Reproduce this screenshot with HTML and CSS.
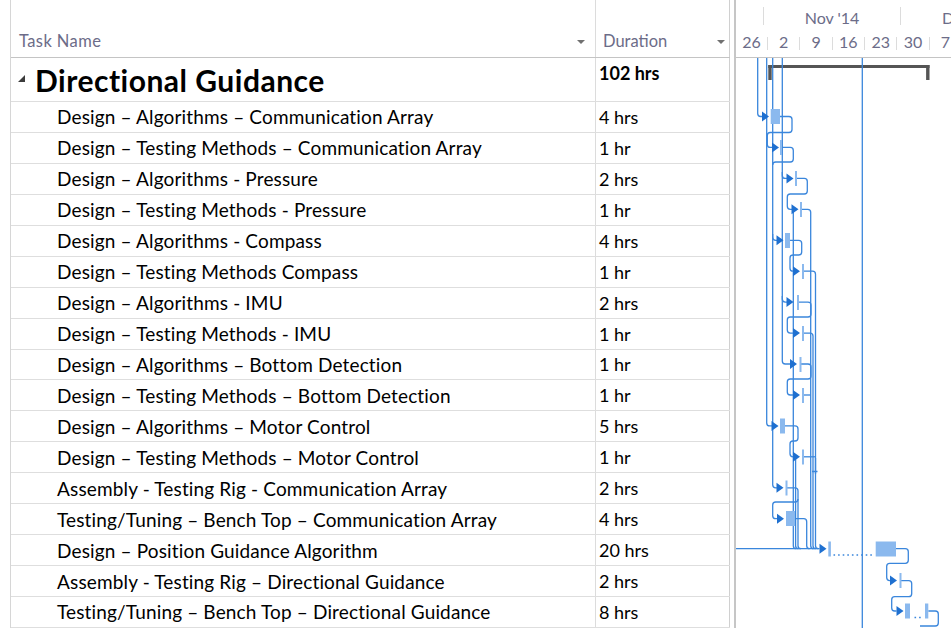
FILE: index.html
```html
<!DOCTYPE html>
<html lang="en">
<head>
<meta charset="utf-8">
<title>Directional Guidance – Gantt</title>
<link rel="stylesheet" href="styles.css">
</head>
<body>
<div class="app">
  <div class="sheet">
    <div class="sheet-head">
      <div class="col col-name"><span class="hlabel name-label">Task Name</span><span class="dd dd-name"></span></div>
      <div class="col col-dur"><span class="hlabel dur-label">Duration</span><span class="dd dd-dur"></span></div>
    </div>
    <div class="row summary">
      <div class="col col-name"><span class="twisty"></span><span class="sum-title">Directional Guidance</span></div>
      <div class="col col-dur"><span class="sum-dur">102 hrs</span></div>
    </div>
    <div class="row task"><div class="col col-name">Design – Algorithms – Communication Array</div><div class="col col-dur">4 hrs</div></div>
    <div class="row task"><div class="col col-name">Design – Testing Methods – Communication Array</div><div class="col col-dur">1 hr</div></div>
    <div class="row task"><div class="col col-name">Design – Algorithms - Pressure</div><div class="col col-dur">2 hrs</div></div>
    <div class="row task"><div class="col col-name">Design – Testing Methods - Pressure</div><div class="col col-dur">1 hr</div></div>
    <div class="row task"><div class="col col-name">Design – Algorithms - Compass</div><div class="col col-dur">4 hrs</div></div>
    <div class="row task"><div class="col col-name">Design – Testing Methods Compass</div><div class="col col-dur">1 hr</div></div>
    <div class="row task"><div class="col col-name">Design – Algorithms - IMU</div><div class="col col-dur">2 hrs</div></div>
    <div class="row task"><div class="col col-name">Design – Testing Methods - IMU</div><div class="col col-dur">1 hr</div></div>
    <div class="row task"><div class="col col-name">Design – Algorithms – Bottom Detection</div><div class="col col-dur">1 hr</div></div>
    <div class="row task"><div class="col col-name">Design – Testing Methods – Bottom Detection</div><div class="col col-dur">1 hr</div></div>
    <div class="row task"><div class="col col-name">Design – Algorithms – Motor Control</div><div class="col col-dur">5 hrs</div></div>
    <div class="row task"><div class="col col-name">Design – Testing Methods – Motor Control</div><div class="col col-dur">1 hr</div></div>
    <div class="row task"><div class="col col-name">Assembly - Testing Rig - Communication Array</div><div class="col col-dur">2 hrs</div></div>
    <div class="row task"><div class="col col-name">Testing/Tuning – Bench Top – Communication Array</div><div class="col col-dur">4 hrs</div></div>
    <div class="row task"><div class="col col-name">Design – Position Guidance Algorithm</div><div class="col col-dur">20 hrs</div></div>
    <div class="row task"><div class="col col-name">Assembly - Testing Rig – Directional Guidance</div><div class="col col-dur">2 hrs</div></div>
    <div class="row task"><div class="col col-name">Testing/Tuning – Bench Top – Directional Guidance</div><div class="col col-dur">8 hrs</div></div>
  </div>
  <div class="splitter"></div>
  <div class="chart">
    <div class="timescale">
      <div class="tier tier-top">
        <div class="tcell lead"></div>
        <div class="tcell month">Nov '14</div>
        <div class="tcell month">Dec '14</div>
      </div>
      <div class="tier tier-bottom">
        <div class="wcell lead">26</div>
        <div class="wcell">2</div>
        <div class="wcell">9</div>
        <div class="wcell">16</div>
        <div class="wcell">23</div>
        <div class="wcell">30</div>
        <div class="wcell">7</div>
      </div>
    </div>
    <svg class="gantt" width="215" height="570" viewBox="736 58 215 570">
      <!-- summary bar -->
      <g class="summary-bar">
        <rect x="768.3" y="65" width="161.2" height="3"/>
        <rect x="768.3" y="65" width="3.4" height="15"/>
        <rect x="926.1" y="65" width="3.4" height="15"/>
      </g>

      <!-- dependency links -->
      <g class="links">
        <path d="M757.7 58 V113.5 Q757.7 116.5 760.7 116.5 H762"/>
        <path d="M766.7 58 V422.9 Q766.7 425.9 769.7 425.9 H772"/>
        <path d="M772.7 58 V484.8 Q772.7 487.8 775.7 487.8 H777"/>
        <path d="M772.7 234 V237.3 Q772.7 240.3 775.7 240.3 H777"/>
        <path d="M782.3 58 V361 Q782.3 364 785.3 364 H790"/>
        <path d="M782.3 172 V175.4 Q782.3 178.4 785.3 178.4 H787"/>
        <path d="M782.3 296 V299.1 Q782.3 302.1 785.3 302.1 H787"/>

        <path d="M780 116.5 H789 Q792 116.5 792 119.5 V129.5 Q792 132.5 789 132.5 H770.3 Q767.3 132.5 767.3 135.5 V144.4 Q767.3 147.4 770.3 147.4 H772"/>
        <path d="M782 147.4 H790.3 Q793.3 147.4 793.3 150.4 V159 Q793.3 162 790.3 162 H775.7 Q772.7 162 772.7 165"/>
        <path d="M796.5 178.4 H804.3 Q807.3 178.4 807.3 181.4 V191 Q807.3 194 804.3 194 H790.3 Q787.3 194 787.3 197 V206.3 Q787.3 209.3 790.3 209.3 H792"/>
        <path d="M801.5 209.3 H807.7 Q810.7 209.3 810.7 212.3 V545.7 Q810.7 548.7 813.7 548.7"/>
        <path d="M790 240.3 H798.7 Q801.7 240.3 801.7 243.3 V252 Q801.7 255 798.7 255 H793 Q790 255 790 258 V268.2 Q790 271.2 793 271.2 H793.5"/>
        <path d="M803.5 271.2 H812.5 Q815.5 271.2 815.5 274.2 V545.7 Q815.5 548.7 818.5 548.7"/>
        <path d="M799 302.1 H808 Q811 302.1 811 305.1 V314 Q811 317 808 317 H790.3 Q787.3 317 787.3 320 V330.1 Q787.3 333.1 790.3 333.1 H793.5"/>
        <path d="M803 333.1 H810 Q813 333.1 813 336.1 V545.7 Q813 548.7 816 548.7"/>
        <path d="M801 364 H808 Q811 364 811 367 V376 Q811 379 808 379 H790.3 Q787.3 379 787.3 382 V392 Q787.3 395 790.3 395 H793.5"/>
        <path d="M803 395 H810.7"/>
        <path d="M785 425.9 H795 Q798 425.9 798 428.9 V438 Q798 441 795 441 H793 Q790 441 790 444 V453.8 Q790 456.8 793 456.8 H793.5"/>
        <path d="M803.5 456.8 H815.5"/>
        <path d="M812 471.5 H817.5 M815.5 458 V474"/>
        <path d="M787 487.8 H795 Q798 487.8 798 490.8 V499 Q798 502 795 502 H775.7 Q772.7 502 772.7 505 V515.7 Q772.7 518.7 775.7 518.7 H777"/>
        <path d="M798 499 V545.7 Q798 548.7 801 548.7"/>
        <path d="M795 518.7 H803.7 Q806.7 518.7 806.7 521.7 V545.7 Q806.7 548.7 809.7 548.7"/>
        <path d="M793.3 212 V545.7 Q793.3 548.7 796.3 548.7"/>
        <path d="M795.6 459 V545.7 Q795.6 548.7 798.6 548.7"/>
        <path d="M736 548.7 H819.5"/>

        <path d="M896 548.7 H905.3 Q908.3 548.7 908.3 551.7 V560.3 Q908.3 563.3 905.3 563.3 H889.7 Q886.7 563.3 886.7 566.3 V577.6 Q886.7 580.6 889.7 580.6 H890"/>
        <path d="M901 580.6 H908.7 Q911.7 580.6 911.7 583.6 V593.7 Q911.7 596.7 908.7 596.7 H894.7 Q891.7 596.7 891.7 599.7 V608 Q891.7 611 894.7 611 H896.5"/>
        <path d="M928.3 611 H935.3 Q938.3 611 938.3 614 V623 Q938.3 626 935.3 626 H920"/>

        <path d="M862.3 58 V628"/>
      </g>

      <!-- split gaps -->
      <g class="splits">
        <path d="M833.5 555 H872"/>
        <path d="M914.5 617.5 H923"/>
      </g>

      <!-- task bars -->
      <g class="bars">
        <rect x="770.7" y="109" width="9.3" height="15"/>
        <rect x="780" y="140" width="2" height="15"/>
        <rect x="795" y="171" width="2" height="15"/>
        <rect x="800" y="202" width="2" height="15"/>
        <rect x="785" y="233" width="5" height="15"/>
        <rect x="802" y="264" width="2" height="15"/>
        <rect x="797" y="295" width="2" height="15"/>
        <rect x="802" y="326" width="2" height="15"/>
        <rect x="799.5" y="357" width="2" height="15"/>
        <rect x="802" y="388" width="2" height="15"/>
        <rect x="780" y="418.5" width="5" height="15"/>
        <rect x="802" y="449.5" width="2" height="15"/>
        <rect x="785.5" y="480.5" width="2" height="15"/>
        <rect x="786" y="511" width="9" height="15"/>
        <rect x="828.3" y="541.5" width="2.6" height="15"/>
        <rect x="875.7" y="541.5" width="20.3" height="15"/>
        <rect x="899.5" y="573" width="2" height="15"/>
        <rect x="905" y="603.5" width="5" height="15"/>
        <rect x="925" y="603.5" width="3.3" height="15"/>
      </g>

      <!-- link arrowheads -->
      <g class="arrows">
        <polygon points="762,111.5 769,116.5 762,121.5"/>
        <polygon points="772,142.4 779,147.4 772,152.4"/>
        <polygon points="786.5,173.4 793.5,178.4 786.5,183.4"/>
        <polygon points="791.5,204.3 798.5,209.3 791.5,214.3"/>
        <polygon points="776.5,235.3 783.5,240.3 776.5,245.3"/>
        <polygon points="793,266.2 800,271.2 793,276.2"/>
        <polygon points="786.5,297.1 793.5,302.1 786.5,307.1"/>
        <polygon points="793,328.1 800,333.1 793,338.1"/>
        <polygon points="790,359 797,364 790,369"/>
        <polygon points="793,390 800,395 793,400"/>
        <polygon points="771.5,420.9 778.5,425.9 771.5,430.9"/>
        <polygon points="793,451.8 800,456.8 793,461.8"/>
        <polygon points="776.5,482.8 783.5,487.8 776.5,492.8"/>
        <polygon points="777,513.7 784,518.7 777,523.7"/>
        <polygon points="819.5,543.7 826.5,548.7 819.5,553.7"/>
        <polygon points="890,575.6 897,580.6 890,585.6"/>
        <polygon points="896.5,606 903.5,611 896.5,616"/>
      </g>
    </svg>
  </div>
</div>
</body>
</html>
```

FILE: styles.css
```css
* {
  box-sizing: border-box;
}

body {
  margin: 0;
  background: #ffffff;
  font-family: Lato, "Open Sans", "Liberation Sans", sans-serif;
  color: #000000;
}

.app {
  display: flex;
  width: 951px;
  height: 628px;
  overflow: hidden;
}

/* ---------- task sheet ---------- */

.sheet {
  flex: none;
  width: 720px;
  margin-left: 10px;
  border-left: 1px solid #d6d6d6;
}

.col {
  display: flex;
  align-items: center;
  flex: none;
  height: 100%;
  white-space: nowrap;
}

.col-name {
  width: 585px;
  border-right: 1px solid #dcdcdc;
}

.col-dur {
  width: 134px;
  border-right: 1px solid #d0d0d0;
}

.sheet-head {
  display: flex;
  height: 58px;
  border-bottom: 1px solid #c4c4c4;
}

.sheet-head .col {
  align-items: flex-end;
  padding-bottom: 6px;
}

.hlabel {
  font-size: 16.5px;
  line-height: 20px;
  color: #6c6c88;
}

.name-label {
  padding-left: 8px;
  letter-spacing: 0.4px;
}

.dur-label {
  padding-left: 7px;
}

.dd {
  width: 0;
  height: 0;
  margin-left: auto;
  margin-bottom: 7px;
  border-left: 4px solid transparent;
  border-right: 4px solid transparent;
  border-top: 4px solid #707070;
}

.dd-name {
  margin-right: 10px;
}

.dd-dur {
  margin-right: 4px;
}

.row {
  display: flex;
  height: 30.94px;
  border-bottom: 1px solid #dedede;
}

.row.summary {
  height: 44px;
}

.summary .col-name {
  padding-left: 7px;
}

.twisty {
  width: 0;
  height: 0;
  margin-top: -2px;
  margin-right: 10px;
  border-bottom: 7px solid #3c3c3c;
  border-left: 7px solid transparent;
}

.sum-title {
  font-size: 30px;
  font-weight: 700;
  line-height: 34px;
  letter-spacing: 0.5px;
  color: #000000;
}

.summary .col-dur {
  align-items: flex-start;
  padding: 5px 0 0 3px;
}

.sum-dur {
  font-size: 18px;
  font-weight: 700;
  line-height: 20px;
  color: #000000;
}

.task .col {
  font-size: 18px;
}

.task .col-name {
  padding-left: 46px;
  font-size: 19px;
  letter-spacing: 0.15px;
}

.task .col-dur {
  padding-left: 3px;
}

/* ---------- splitter & chart ---------- */

.splitter {
  flex: none;
  width: 4px;
}

.chart {
  flex: none;
  width: 217px;
  border-left: 2px solid #c6c6c6;
  overflow: hidden;
}

.timescale {
  height: 58px;
  border-bottom: 1px solid #c4c4c4;
  color: #6c6c88;
  font-size: 16px;
}

.tier {
  display: flex;
  align-items: flex-start;
  white-space: nowrap;
}

.tier-top {
  height: 29px;
  padding-top: 7px;
}

.tcell {
  flex: none;
  height: 18px;
  padding-top: 2px;
  line-height: 18px;
  text-align: center;
  border-left: 1px solid #dcdcdc;
}

.tcell.lead {
  width: 27px;
  border-left: none;
}

.tcell.month {
  width: 137px;
}

.tier-bottom {
  height: 28px;
  padding-top: 8px;
}

.wcell {
  flex: none;
  width: 32.35px;
  height: 13px;
  line-height: 10px;
  text-align: center;
  border-left: 1px solid #dcdcdc;
}

.wcell.lead {
  width: 31px;
  border-left: none;
}

.gantt {
  display: block;
}

.summary-bar rect {
  fill: #555555;
}

.links path {
  fill: none;
  stroke: #3a86dc;
  stroke-width: 1.3;
}

.splits path {
  fill: none;
  stroke: #3a86dc;
  stroke-width: 1.6;
  stroke-dasharray: 1.6 3;
}

.bars rect {
  fill: #8bb9ee;
}

.arrows polygon {
  fill: #1f70d0;
}
```
